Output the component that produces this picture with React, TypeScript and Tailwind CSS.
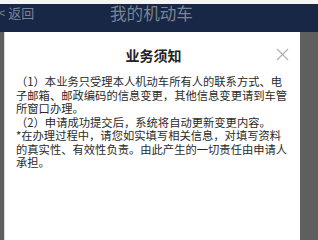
import React from "react";

const cjk = { fontFamily: '"Noto Sans CJK SC", "Noto Sans", sans-serif' };

export default function App() {
  const lines = [
    "（1）本业务只受理本人机动车所有人的联系方式、电",
    "子邮箱、邮政编码的信息变更，其他信息变更请到车管",
    "所窗口办理。",
    "（2）申请成功提交后，系统将自动更新变更内容。",
    "*在办理过程中，请您如实填写相关信息，对填写资料",
    "的真实性、有效性负责。由此产生的一切责任由申请人",
    "承担。",
  ];
  return (
    <div className="w-[318px] h-[240px] overflow-hidden flex flex-col bg-[#5f5f5f]" style={cjk}>
      <div className="h-[4px] bg-[#f4f4f4] shrink-0" />
      <div className="h-[28px] shrink-0 bg-[#172745] relative">
        <div className="absolute left-[-2px] top-[1px] flex items-center text-[13px] leading-[16px] text-[#7a8494]">
          <span className="mr-[3px]">&lt;</span>
          <span>返回</span>
        </div>
        <div className="absolute left-[110px] top-[-1px] text-[16.6px] leading-[20px] text-[#7a8494]">
          我的机动车
        </div>
      </div>
      <div className="flex-1 flex pl-[4px] pr-[18px]">
        <div className="flex-1 bg-white border-l border-[#d8d8d8] relative">
          <div className="text-center font-bold text-[14px] leading-[18px] h-[18px] text-[#222] mt-[14px] pl-[2px]">
            业务须知
          </div>
          <svg
            className="absolute left-[271px] top-[16px]"
            width="13"
            height="13"
            viewBox="0 0 13 13"
          >
            <path d="M1 1 L12 12 M12 1 L1 12" stroke="#b0b0b0" strokeWidth="1.2" fill="none" />
          </svg>
          <div className="mt-[11px] pl-[11px] text-[#2a2a2a] flex flex-col">
            {lines.map((l, i) => (
              <div key={i} className="whitespace-nowrap text-[11.3px] leading-[13.5px] h-[13.5px] shrink-0">
                {l}
              </div>
            ))}
          </div>
        </div>
      </div>
    </div>
  );
}
